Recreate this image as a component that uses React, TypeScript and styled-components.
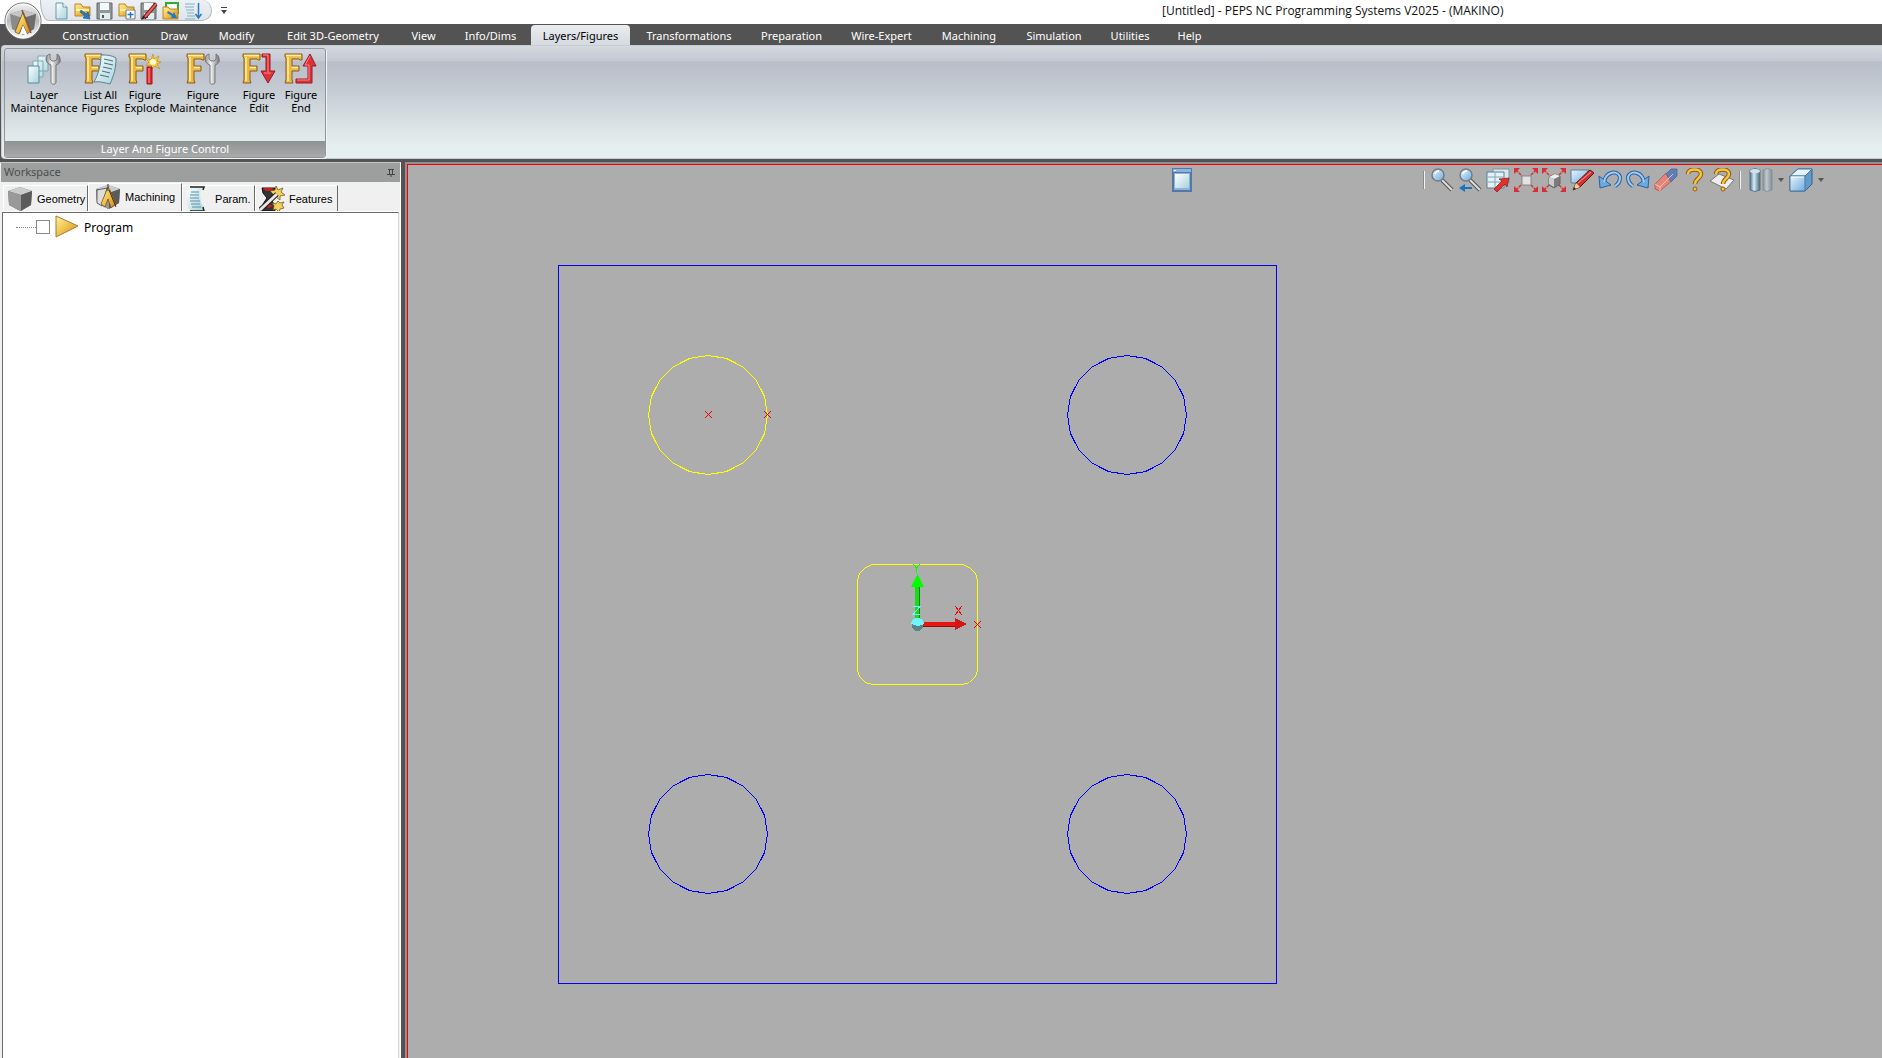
import React from 'react';
import styled, { createGlobalStyle } from 'styled-components';

const Global = createGlobalStyle`
  * { box-sizing: border-box; }
  html, body, #root { height: 100%; margin: 0; }
  body { overflow: hidden; background: #535353; font-family: "Noto Sans", "Open Sans", sans-serif; font-size: 11px; }
  button { font: inherit; color: inherit; border: 0; padding: 0; background: none; }
  svg { display: block; flex: none; }
`;

const Shell = styled.div`
  display: flex;
  flex-direction: column;
  height: 100vh;
  position: relative;
`;
const TitleBar = styled.header`
  display: flex;
  height: 24px;
  flex: none;
  background: #fff;
  padding-left: 40px;
`;
const QuickBar = styled.div`
  display: flex;
  align-items: center;
  gap: 2px;
  width: 172px;
  height: 21px;
  padding: 1px 0 0 10px;
  background: linear-gradient(#edf1f5, #dfe4ec);
  border: 1px solid #b4bac6;
  border-top: 0;
  border-radius: 0 10px 10px 9px / 0 10px 10px 20px;
`;
const QuickButton = styled.button`
  display: grid;
  place-items: center;
  width: 20px;
  height: 20px;
`;
const More = styled.button`
  margin-left: 4px;
  width: 14px;
  height: 20px;
`;
const Title = styled.h1`
  flex: 1;
  margin: 0;
  padding-left: 932px;
  font-size: 12px;
  font-family: "Open Sans", "Noto Sans", sans-serif;
  font-weight: 400;
  line-height: 22px;
  color: #111;
  white-space: nowrap;
`;
const Orb = styled.button`
  position: absolute;
  left: 4px;
  top: 2px;
  width: 38px;
  height: 38px;
`;
const MenuBar = styled.nav`
  display: flex;
  height: 21px;
  flex: none;
  background: #535353;
  padding-left: 47px;
`;
const MenuTab = styled.button<{ $w: number; $active?: boolean }>`
  width: ${p => p.$w}px;
  height: 20px;
  margin-top: 1px;
  line-height: 22px;
  white-space: nowrap;
  color: ${p => (p.$active ? '#000' : '#fff')};
  background: ${p => (p.$active ? 'linear-gradient(#e9edef, #d6dae1)' : 'none')};
  border-radius: 4px 4px 0 0;
`;
const Ribbon = styled.section`
  height: 114px;
  flex: none;
  margin-left: 1px;
  padding: 2px 2px 0;
  border: 1px solid #c9cccf;
  border-right: 0;
  border-radius: 4px 0 0 4px;
  background: linear-gradient(#d5d9e0 0, #c3c8d1 15px, #b8bdc8 16px, #c6ccd4 45px, #e6efef 100px, #e6efef);
`;
const Group = styled.div`
  display: flex;
  flex-direction: column;
  width: 322px;
  height: 110px;
  border: 1px solid #90959b;
  border-radius: 3px;
  box-shadow: 1px 1px 0 #f2f5f5;
  overflow: hidden;
`;
const Tools = styled.div`
  display: flex;
  flex: 1;
  padding: 4px 5px;
`;
const Tool = styled.button<{ $w: number }>`
  display: flex;
  flex-direction: column;
  align-items: center;
  width: ${p => p.$w}px;
  flex: none;
  line-height: 13px;
  color: #000;
  span { white-space: pre; margin-top: 3px; }
`;
const GroupTitle = styled.div`
  height: 16px;
  background: linear-gradient(#8f9292, #a9abab);
  color: #fff;
  line-height: 16px;
  text-align: center;
`;
const Main = styled.main`
  display: flex;
  flex: 1;
  min-height: 0;
  margin-top: 3px;
`;
const Side = styled.aside`
  display: flex;
  flex-direction: column;
  width: 401px;
  flex: none;
  padding-left: 1px;
  border-top: 1px solid #c4c6c6;
  border-right: 1px solid #fff;
  background: #f0f0f0;
`;
const SideHead = styled.div`
  display: flex;
  align-items: center;
  justify-content: space-between;
  height: 19px;
  flex: none;
  padding: 0 5px 0 3px;
  background: #9d9f9f;
  color: #4c4c4c;
  line-height: 17px;
  span { height: 19px; }
`;
const Tabs = styled.div`
  display: flex;
  align-items: flex-end;
  height: 30px;
  flex: none;
  padding-left: 2px;
`;
const Tab = styled.button<{ $w: number; $active?: boolean }>`
  display: flex;
  align-items: center;
  gap: 4px;
  width: ${p => p.$w}px;
  height: ${p => (p.$active ? 29 : 27)}px;
  padding: ${p => (p.$active ? '0 0 3px 6px' : '0 0 0 3px')};
  border-top: 1px solid #fff;
  border-left: 1px solid #fff;
  border-right: 1px solid #696969;
  font: 11px "Liberation Sans", Arial, sans-serif;
  color: #000;
`;
const Tree = styled.div`
  flex: 1;
  margin: 0 1px 0 1px;
  padding-top: 1px;
  border: 1px solid #696969;
  border-right-color: #d8d8d8;
  border-bottom: 0;
  box-shadow: 0 -1px 0 #fff;
  background: #fff;
`;
const TreeItem = styled.label`
  display: flex;
  align-items: center;
  height: 26px;
  padding-left: 13px;
  font-size: 12px;
`;
const Branch = styled.i`
  width: 20px;
  border-top: 1px dotted #888;
`;
const Check = styled.input`
  appearance: none;
  width: 14px;
  height: 14px;
  margin: 0 5px 0 0;
  border: 1px solid #8a8a8a;
  background: #fff;
`;
const ItemName = styled.span`
  margin-left: 5px;
`;
const Viewport = styled.section`
  position: relative;
  flex: 1;
  min-width: 0;
  margin-left: 4px;
  border-top: 2px solid #909090;
  border-left: 2px solid #909090;
  background: #adadad;
`;
const Frame = styled.div`
  height: 100%;
  border-top: 1px solid #f00000;
  border-left: 1px solid #f00000;
`;
const Drawing = styled.svg`
  position: absolute;
  left: 0;
  top: 0;
`;
const ViewTools = styled.div`
  position: absolute;
  top: 3px;
  right: 55px;
  display: flex;
  align-items: center;
`;
const ViewButton = styled.button<{ $w?: number }>`
  display: grid;
  place-items: center;
  width: ${p => p.$w ?? 28}px;
  height: 26px;
`;
const Rule = styled.i<{ $gap: number }>`
  width: 1px;
  height: 18px;
  margin: 0 ${p => p.$gap}px 0 4px;
  background: #f2f2f2;
  box-shadow: -1px 0 0 #8b8b8b;
`;
const WindowButton = styled.button`
  position: absolute;
  left: 765px;
  top: 4px;
`;

const Defs = () => (
  <svg width="0" height="0" style={{ position: 'absolute' }} aria-hidden="true">
    <defs>
      <linearGradient id="gold" x1="0" y1="0" x2="1" y2="1"><stop offset="0" stopColor="#fff2a0" /><stop offset=".5" stopColor="#f0c24a" /><stop offset="1" stopColor="#c08526" /></linearGradient>
      <linearGradient id="ice" x1="0" y1="0" x2="1" y2="1"><stop offset="0" stopColor="#fff" /><stop offset="1" stopColor="#a5d3dc" /></linearGradient>
      <linearGradient id="blue" x1="0" y1="0" x2="1" y2="1"><stop offset="0" stopColor="#e8f6ff" /><stop offset="1" stopColor="#6fa9dc" /></linearGradient>
      <linearGradient id="steel"><stop offset="0" stopColor="#888" /><stop offset=".4" stopColor="#f4f4f4" /><stop offset="1" stopColor="#777" /></linearGradient>
      <linearGradient id="cyl"><stop offset="0" stopColor="#4d7186" /><stop offset=".4" stopColor="#d9edf8" /><stop offset="1" stopColor="#45677b" /></linearGradient>
      <linearGradient id="orb" x2="0" y2="1"><stop offset="0" stopColor="#f4f4f4" /><stop offset=".5" stopColor="#b9b9b9" /><stop offset="1" stopColor="#fff" /></linearGradient>
    </defs>
  </svg>
);

const FigureMark = () => (
  <g>
    <path d="M0 1h17v6h-2l-1-1H7v7h7v5H7v9l1 3H0l1-3V5L0 4z" fill="#e9b944" stroke="#8a5a1b" strokeWidth="1" />
    <path d="M1 2.500h15M3 4v24M7 14.500h6" fill="none" stroke="#fff0a6" strokeWidth="1.500" />
  </g>
);
const Wrench = ({ x = 0 }: { x?: number }) => (
  <path transform={`translate(${x} 0)`} d="M4 1C1 2 0 4 0 6c0 3 2 5 5 6v17c0 3 5 3 5 0V12c3-1 5-3 4-6 0-2-1-4-3-5v5L9 8H6L4 6z" fill="url(#steel)" stroke="#666" strokeWidth=".8" />
);
const Cube = ({ fold }: { fold?: boolean }) => (
  <svg width="26" height="26" viewBox="0 0 26 26">
    <path d="M1 5 13 1l12 4-1 14-11 6-11-6z" fill="#777" />
    <path d="m1 5 12-4 12 4-11 4z" fill="#ccc" />
    <path d="m1 5 13 4v16L2 19z" fill="#999" />
    <path d="m14 9 11-4-1 14-10 6z" fill="#5b5b5b" />
    {fold && <>
      <path d="M2 6v13l5 3L12 4z" fill="#ddd" stroke="#333" strokeWidth=".7" />
      <path d="m13 3-7 17 4 3 3-8 3 9 5-4-6-14z" fill="url(#gold)" stroke="#6b4510" strokeWidth=".7" />
      <path d="M13 0v7M14 6l7 17" fill="none" stroke="#3b2a20" />
    </>}
  </svg>
);
const Scroll = () => (
  <svg width="22" height="26" viewBox="0 0 22 26">
    <path d="M4 1h14l-1 3h-2c-2 5 0 13 2 17l1 4H4l-2-3C0 15 0 7 2 3z" fill="url(#ice)" />
    <path d="M4 1h14l-1 3M17 21l1 4H4" fill="none" stroke="#222" strokeWidth="1.500" />
    <path d="M5 6h8M4 9h9M4 12h9M4 15h10M5 18h9M6 21h9" stroke="#5590a5" />
  </svg>
);
const FeatureIcon = () => (
  <svg width="26" height="26" viewBox="0 0 26 26">
    <path d="M3 2h13l-1 5-4 5 4 6 1 7H3l1-7 4-6-4-5z" fill="#343434" stroke="#111" />
    <path d="M4 2h11l-3 3H7zM6 20l4-2 4 2-4 2z" fill="#c42222" />
    <path d="m17 0 2 4 5-2-2 4 4 3-5 1v4l-4-3-3 2v-5l-3-3 5-1zM19 15l2 2 4-1-2 3 2 3-4 1-1 3-3-3-3 1 1-4-2-3 4 1z" fill="#f4d060" stroke="#6c4907" strokeWidth=".7" />
    <path d="M1 24 18 8" stroke="#222" strokeWidth="5" /><path d="M1 24 18 8" stroke="#e8e8e8" strokeWidth="3" />
  </svg>
);

const ToolIcon = ({ kind }: { kind: string }) => (
  <svg width="32" height="32" viewBox="0 0 32 32" overflow="visible">
    {kind === 'layers' && <>
      <path d="M10 3h10v15H10zM5 8h10v16H5z" fill="url(#ice)" stroke="#7aa9b2" />
      <path d="M0 13h11v17H0z" fill="url(#ice)" stroke="#548c99" /><Wrench x={18} />
    </>}
    {kind !== 'layers' && <FigureMark />}
    {kind === 'list' && <>
      <path d="M16 2c5 0 10 0 15 3 0 10-2 17-6 26-5-1-10-3-16-2 5-9 7-18 7-27z" fill="url(#ice)" stroke="#568392" />
      <path d="m19 6 9 2m-9 2 9 2m-10 2 9 2m-10 2 8 2m-10 2 9 2" stroke="#3f7080" />
    </>}
    {kind === 'explode' && <>
      <path d="m24 1 1 5 5-3-2 5 4 1-4 2 3 5-5-3-3 3-1-4-5 1 3-4-4-4 6 2z" fill="#f7ce35" stroke="#c98622" strokeWidth=".7" />
      <circle cx="24" cy="9" r="3" fill="#fffbd0" />
      <path d="M18 14h5v17h-5z" fill="#e2242b" stroke="#a01515" /><path d="M20 15v15" stroke="#ff9b9b" />
    </>}
    {kind === 'wrench' && <Wrench x={18} />}
    {kind === 'edit' && <>
      <path d="M19 1h8v17h5l-7 12-7-12h5V4h-4z" fill="#dd3038" stroke="#9a1a20" />
      <path d="M20 2h5v17M21 20h7" fill="none" stroke="#f58a8c" />
    </>}
    {kind === 'end' && <>
      <path d="M11 26h12V13h-5l7-12 6 12h-4v17H11z" fill="#dd3038" stroke="#9a1a20" />
      <path d="M12 27h12V12h-4l5-9" fill="none" stroke="#f58a8c" />
    </>}
  </svg>
);

const QuickIcon = ({ kind }: { kind: string }) => (
  <svg width="18" height="18" viewBox="0 0 18 18">
    {kind === 'new' && <><path d="M4 1h7l4 4v12H4z" fill="url(#ice)" stroke="#639ba8" /><path d="M11 1v4h4" fill="#fff" stroke="#639ba8" /></>}
    {(kind === 'open' || kind === 'add') && <path d="M1 2h6l2 3h7v9H1z" fill="url(#gold)" stroke="#b98425" />}
    {(kind === 'open' || kind === 'add') && <path d="M2 8h13" stroke="#fff1b0" strokeWidth="2" />}
    {kind === 'open' && <path d="m7 8 5 4 2-2 2 7-7-1 2-2-5-4z" fill="#2879c4" stroke="#155390" strokeWidth=".6" />}
    {kind === 'add' && <><path d="M8 8h9v9H8z" fill="#fff" stroke="#777" /><path d="M12.500 10v6M9.500 12.500h6" stroke="#2672c5" strokeWidth="1.500" /></>}
    {(kind === 'save' || kind === 'saveas') && <><path d="M1 1h15v16H1z" fill="#929899" stroke="#666" /><path d="M4 1h9v7H4z" fill="#f4fafa" /><path d="M4 11h10v6H4z" fill="#deeeee" /><path d="M6 13h2v3H6z" fill="#555" /></>}
    {kind === 'saveas' && <><path d="M4 16 16 2" stroke="#661818" strokeWidth="4" /><path d="M5 15 16 2" stroke="#e8605a" strokeWidth="2" /><path d="m1 18 2-4 2 2z" fill="#222" /></>}
    {kind === 'import' && <><path d="M4 1h12v10H4z" fill="#fff" stroke="#2fae30" strokeWidth="2" /><path d="M1 5h5l2 2h8v10H1z" fill="url(#gold)" stroke="#b98425" /><path d="m6 9 5 3 1-2 3 6-6 0 1-2-5-3z" fill="#2879c4" /></>}
    {kind === 'sort' && <><path d="M1 2h10M1 5h9M2 8h8M3 11h7M3 14h8M1 17h10" stroke="#7fb3bf" /><path d="M14.500 1v14m-3-3 3 4 3-4" fill="none" stroke="#2879c4" strokeWidth="1.500" /></>}
  </svg>
);

const corners = 'M2 2l7 7M22 2l-7 7M2 22l7-7M22 22l-7-7';
const arrowHeads = 'M0 0h6L0 6zM24 0v6l-6-6zM0 24v-6l6 6zM24 24h-6l6-6z';
const ViewIcon = ({ kind }: { kind: string }) => (
  <svg width="24" height="24" viewBox="0 0 24 24">
    {(kind === 'zoom' || kind === 'zoomback') && <>
      <path d="m12 12 10 10" stroke="#555" strokeWidth="4" /><path d="m12 12 10 10" stroke="#ddd" strokeWidth="2" />
      <circle cx="8" cy="7" r="6" fill="url(#blue)" stroke="#727c85" strokeWidth="1.500" />
      <path d="M5 6q1-3 4-3" fill="none" stroke="#fff" strokeWidth="1.500" />
      {kind === 'zoomback' && <path d="m1 20 6-4v3h7v2H7v3z" fill="#1c74c1" />}
    </>}
    {kind === 'window' && <>
      <path d="M7 1h16v14H7z" fill="#dbe9ef" stroke="#7d95a2" /><path d="M1 4h17v16H1z" fill="#e3f1f8" stroke="#5b7f95" /><path d="M2 9h16M9 5v14M2 14h16" stroke="#83a6b8" />
      <path d="m8 21 8-8-3-2 10-1-2 9-2-3-8 8z" fill="#e23030" stroke="#8d1414" strokeWidth=".7" />
    </>}
    {(kind === 'fit' || kind === 'fitcube') && <>
      <path d={corners} stroke="#c9383c" strokeWidth="1.500" strokeDasharray="3 1" /><path d={arrowHeads} fill="#dc2b33" />
      {kind === 'fit' ? <path d="M8 8h9v9H8z" fill="#e3e3e3" stroke="#888" /> : <><path d="m7 9 6-3 5 2v8l-6 4-5-3z" fill="#7b7b7b" stroke="#666" /><path d="m7 9 6-3 5 2-6 3z" fill="#eee" /><path d="m7 9 5 2v8l-5-3z" fill="#ccc" /></>}
    </>}
    {kind === 'draw' && <><path d="M1 2h18L8 15H1z" fill="url(#blue)" stroke="#5d7e90" /><path d="m3 22 3-7L20 2l4 3L10 19z" fill="#cf3430" stroke="#5d1414" /><path d="m8 15 13-11" stroke="#ff9a89" /><path d="m3 22 3-7 4 4z" fill="#f4d198" /><path d="m3 22 1-3 2 2z" fill="#222" /></>}
    {(kind === 'undo' || kind === 'redo') && <g transform={kind === 'redo' ? 'matrix(-1 0 0 1 24 0)' : undefined}>
      <path d="M6 14C8 3 20 2 22 9c0 4-1 7-5 9" fill="none" stroke="#2a62a0" strokeWidth="4" />
      <path d="m1 8 1 12 11-3z" fill="#6da8de" stroke="#2a62a0" />
      <path d="M6 14C8 3 20 2 22 9c0 4-1 7-5 9" fill="none" stroke="#9fcdf2" strokeWidth="2" />
    </g>}
    {kind === 'eraser' && <><path d="m1 16 11-11 8 6L6 23l-5-2z" fill="#e78478" stroke="#a05050" strokeWidth=".7" /><path d="m12 6 5-5h6v7l-6 6z" fill="#5f7fb4" stroke="#4b6390" strokeWidth=".7" /><path d="m1 16 5 3 13-13" fill="none" stroke="#f6beb4" /><path d="m6 19v4" stroke="#f6beb4" /></>}
    {kind === 'helpsheet' && <path d="m0 13 9-7 15 6-8 9z" fill="#eee" stroke="#777" />}
    {(kind === 'help' || kind === 'helpsheet') && <g fill="none" transform="translate(-1 0)">
      <path d="M7 6c0-6 13-6 13 0 0 4-6 5-6 10" stroke="#8f5d0c" strokeWidth="4.500" /><path d="M7 6c0-6 13-6 13 0 0 4-6 5-6 10" stroke="#f6c544" strokeWidth="2.500" /><circle cx="14" cy="21" r="2" fill="#f6c544" stroke="#8f5d0c" />
    </g>}
    {kind === 'cylinders' && <><path d="M1 2q5-3 10 0v20q-5 3-10 0z" fill="url(#cyl)" stroke="#58758a" /><ellipse cx="6" cy="3" rx="5" ry="2" fill="#cee3ed" /><path d="M14 2q5-3 9 0v20q-5 3-9 0z" fill="url(#cyl)" stroke="#58758a" opacity=".45" /></>}
    {kind === 'cube' && <><path d="m1 8 8-7h14v15l-7 7H1z" fill="#5f9bcd" stroke="#346487" /><path d="m1 8 8-7h14l-7 7z" fill="#e3f3ff" stroke="#4e7899" /><path d="M1 8h15v15H1z" fill="url(#blue)" stroke="#4e7899" /><path d="m2 9h13" stroke="#fff" /></>}
  </svg>
);
const Caret = () => <svg width="6" height="4" viewBox="0 0 6 4"><path d="M0 0h6L3 4z" fill="#555" /></svg>;

const menu: [string, number][] = [['Construction', 97], ['Draw', 60], ['Modify', 65], ['Edit 3D-Geometry', 128], ['View', 53], ['Info/Dims', 81], ['Layers/Figures', 99], ['Transformations', 118], ['Preparation', 87], ['Wire-Expert', 93], ['Machining', 82], ['Simulation', 88], ['Utilities', 64], ['Help', 55]];
const tools: [string, string, number][] = [['layers', 'Layer\nMaintenance', 68], ['list', 'List All\nFigures', 45], ['explode', 'Figure\nExplode', 44], ['wrench', 'Figure\nMaintenance', 72], ['edit', 'Figure\nEdit', 40], ['end', 'Figure\nEnd', 44]];
const quick = ['new', 'open', 'save', 'add', 'saveas', 'import', 'sort'];
const views = ['zoom', 'zoomback', 'window', 'fit', 'fitcube', 'draw', 'undo', 'redo', 'eraser', 'help', 'helpsheet'];

const circlePoints = (cx: number, cy: number) =>
  Array.from({ length: 20 }, (_, i) => {
    const a = (i * Math.PI) / 10;
    return `${(cx + 59.5 * Math.cos(a)).toFixed(1)},${(cy + 59.5 * Math.sin(a)).toFixed(1)}`;
  }).join(' ');
const cross = (x: number, y: number) => `M${x - 3} ${y - 3}l7 7m0-7l-7 7`;

const Model = () => (
  <Drawing width="100%" height="100%" viewBox="407 164 1475 894" preserveAspectRatio="xMinYMin slice" shapeRendering="crispEdges" fill="none">
    <rect x="558.5" y="265.5" width="718" height="718" stroke="#0000f5" />
    <polygon points={circlePoints(708, 415)} stroke="#ff0" />
    <polygon points={circlePoints(1127, 415)} stroke="#0000f5" />
    <polygon points={circlePoints(708, 834)} stroke="#0000f5" />
    <polygon points={circlePoints(1127, 834)} stroke="#0000f5" />
    <path d="M872.5 564.5h90l7 3 6 6 2 7v90l-2 6-6 6-7 2h-90l-7-2-6-6-2-6v-90l2-7 6-6z" stroke="#ff0" />
    <path d={cross(708, 414) + cross(767, 414) + cross(977, 624)} stroke="#f00000" />
    <path d="M955 606l7 9m0-9l-7 9" stroke="#f00000" />
    <path d="M915 586h5v36h-5z" fill="#17dc17" /><path d="M919.500 586v36" stroke="#118511" />
    <path d="M917.500 574 911 587h13z" fill="#0f0" />
    <path d="M923 622h32v5h-32z" fill="#e81515" /><path d="M923 626.500h32" stroke="#8d1010" />
    <path d="m955 618 12 6-12 6z" fill="#d01717" />
    <path d="m913 564 3.500 4 3.500-4m-3.500 4v5" stroke="#0f0" />
    <path d="M913 606.500h7l-7 8h7" stroke="#72f5ff" />
    <circle cx="917.500" cy="625" r="6" fill="#588489" /><path d="M911 624q1-6 7-6 5 0 6 6l-6 2z" fill="#70f5fa" />
  </Drawing>
);

export default function App() {
  return (
    <Shell>
      <Global />
      <Defs />
      <TitleBar>
        <QuickBar>{quick.map(k => <QuickButton key={k} aria-label={k}><QuickIcon kind={k} /></QuickButton>)}</QuickBar>
        <More aria-label="Customize"><svg width="14" height="20"><path d="M5 7h6v1H5zM5 10h6l-3 4z" fill="#444" /></svg></More>
        <Title>[Untitled] - PEPS NC Programming Systems V2025 - (MAKINO)</Title>
      </TitleBar>
      <MenuBar>{menu.map(([t, w]) => <MenuTab key={t} $w={w} $active={t === 'Layers/Figures'}>{t}</MenuTab>)}</MenuBar>
      <Orb aria-label="Application menu">
        <svg width="38" height="38" viewBox="0 0 38 38">
          <circle cx="19" cy="19" r="18" fill="url(#orb)" stroke="#6a6a6a" />
          <circle cx="19" cy="19" r="17" fill="none" stroke="#fff" />
          <path d="m6 12 13-4 13 4-2 15-11 6-11-6z" fill="#8b8b8b" />
          <path d="m6 12 13-4 13 4-13 4z" fill="#c6c6c6" />
          <path d="m20 16 12-4-2 15-8 4z" fill="#6e6e6e" />
          <path d="m19 10-8 20 4 2 4-9 4 9 4-3z" fill="url(#gold)" stroke="#684414" strokeWidth=".7" />
          <path d="m16 32 3-9 4 9z" fill="#fff" />
          <path d="m18 8 9 23" stroke="#83573a" strokeWidth="1.500" />
        </svg>
      </Orb>
      <Ribbon>
        <Group>
          <Tools>{tools.map(([k, t, w]) => <Tool key={k} $w={w}><ToolIcon kind={k} /><span>{t}</span></Tool>)}</Tools>
          <GroupTitle>Layer And Figure Control</GroupTitle>
        </Group>
      </Ribbon>
      <Main>
        <Side>
          <SideHead>
            <span>Workspace</span>
            <button aria-label="Pin"><svg width="8" height="8"><path d="M1 .5h6M2.500 0v5M5.500 0v5M0 5.500h8M4 5v3" stroke="#444" fill="none" /></svg></button>
          </SideHead>
          <Tabs>
            <Tab $w={85}><Cube />Geometry</Tab>
            <Tab $w={94} $active><Cube fold />Machining</Tab>
            <Tab $w={73}><Scroll />&nbsp;Param.</Tab>
            <Tab $w={83}><FeatureIcon />Features</Tab>
          </Tabs>
          <Tree>
            <TreeItem>
              <Branch /><Check type="checkbox" />
              <svg width="24" height="24" viewBox="0 0 24 24"><path d="M1 1v21l22-11z" fill="url(#gold)" stroke="#a87a35" /></svg>
              <ItemName>Program</ItemName>
            </TreeItem>
          </Tree>
        </Side>
        <Viewport>
          <Frame />
          <Model />
          <WindowButton aria-label="Window">
            <svg width="20" height="24" viewBox="0 0 20 24"><path d="M0 0h20v24H0z" fill="#5577a3" /><path d="M1 1h18v3H1z" fill="#8fb2dc" /><path d="M2 5h16v17H2z" fill="#8fb2dc" /><path d="M3 6h14v14H3z" fill="url(#ice)" /><path d="M2 2h2v1H2z" fill="#fff" /></svg>
          </WindowButton>
          <ViewTools>
            <Rule $gap={3} />
            {views.map(k => <ViewButton key={k} aria-label={k}><ViewIcon kind={k} /></ViewButton>)}
            <Rule $gap={6} />
            <ViewButton aria-label="Display mode"><ViewIcon kind="cylinders" /></ViewButton>
            <ViewButton $w={12} aria-label="Display options"><Caret /></ViewButton>
            <ViewButton aria-label="View cube"><ViewIcon kind="cube" /></ViewButton>
            <ViewButton $w={12} aria-label="View options"><Caret /></ViewButton>
          </ViewTools>
        </Viewport>
      </Main>
    </Shell>
  );
}
